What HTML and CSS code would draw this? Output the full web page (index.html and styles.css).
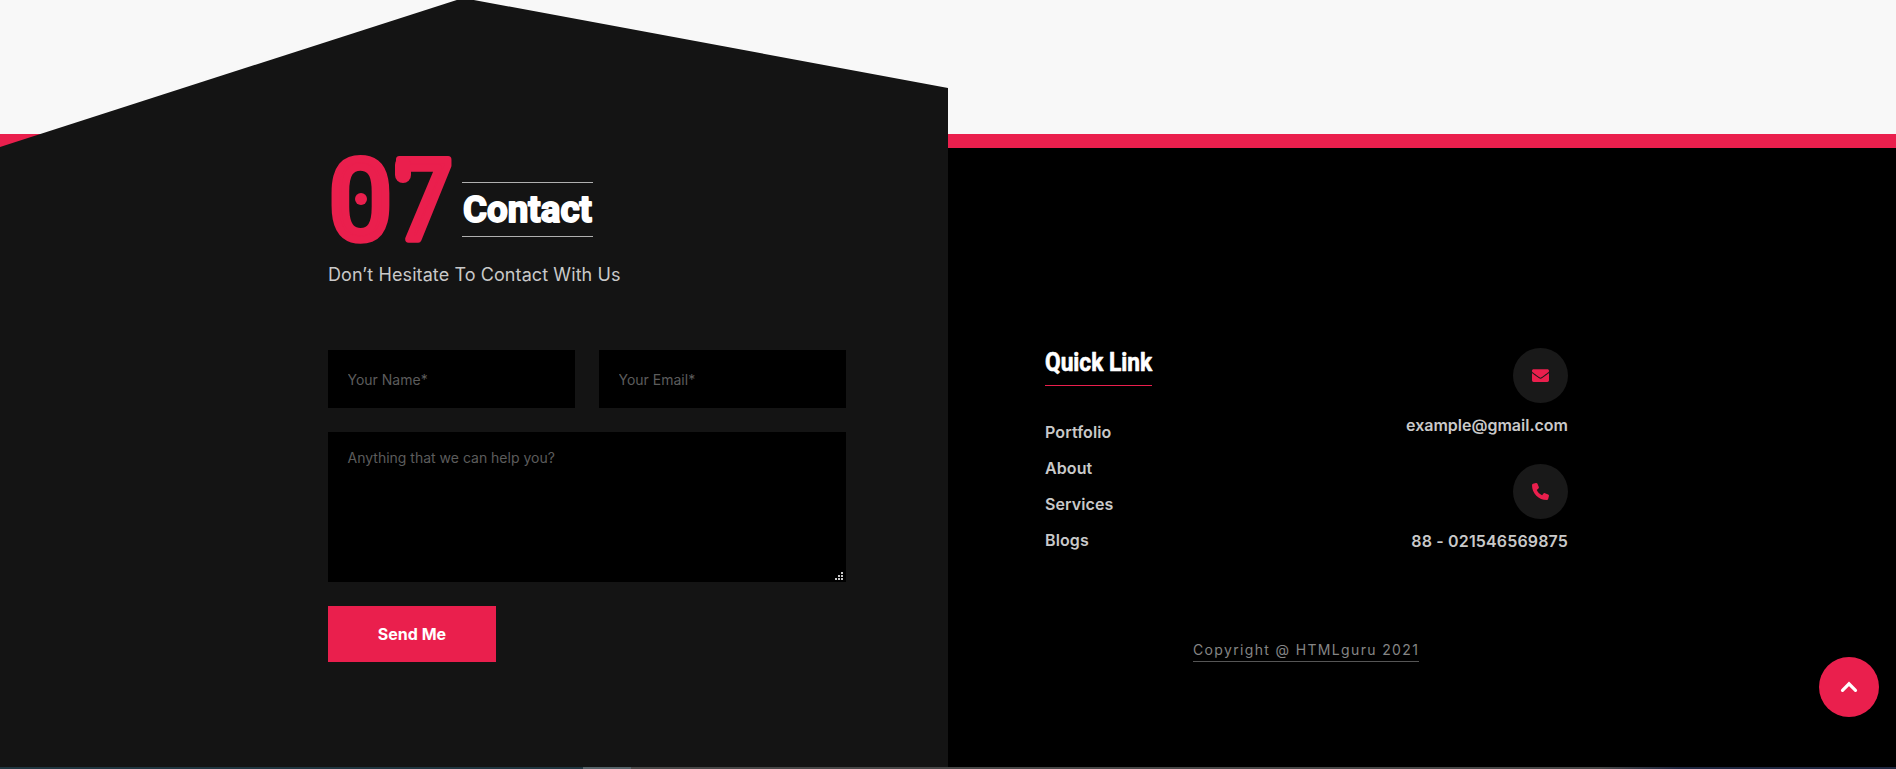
FILE: index.html
```html
<!DOCTYPE html>
<html lang="en">
<head>
<meta charset="utf-8">
<title>Contact</title>
<link rel="stylesheet" href="styles.css">
</head>
<body>
<main class="page">
  <div class="band"></div>
  <div class="columns">
    <section class="contact">
      <header class="title">
        <svg class="number" width="126" height="96" viewBox="0 0 126 96"><text y="86.500"><tspan x="0">0</tspan><tspan x="66.500" textLength="57" lengthAdjust="spacingAndGlyphs">7</tspan></text><circle cx="32" cy="47" r="6"/><path d="M74 13v10"/></svg>
        <h2 class="heading"><svg width="131" height="53" viewBox="0 0 131 53"><text x="1" y="39" textLength="129" lengthAdjust="spacingAndGlyphs">Contact</text></svg></h2>
      </header>
      <p class="subtitle">Don’t Hesitate To Contact With Us</p>
      <form class="form">
        <div class="row">
          <input class="field" type="text" placeholder="Your Name*">
          <input class="field" type="text" placeholder="Your Email*">
        </div>
        <div class="message">
          <textarea class="field area" placeholder="Anything that we can help you?"></textarea>
          <svg class="grip" width="8" height="8" viewBox="0 0 8 8"><path d="M6 0h2v2H6zM3 3h2v2H3zM6 3h2v2H6zM0 6h2v2H0zM3 6h2v2H3zM6 6h2v2H6z"/></svg>
        </div>
        <button class="send" type="button">Send Me</button>
      </form>
    </section>
    <footer class="footer">
      <div class="info">
        <nav class="links">
          <h3 class="links-title"><svg width="107" height="37" viewBox="0 0 107 37"><text x="0" y="23" textLength="107" lengthAdjust="spacingAndGlyphs">Quick Link</text></svg></h3>
          <a>Portfolio</a>
          <a>About</a>
          <a>Services</a>
          <a>Blogs</a>
        </nav>
        <div class="reach">
          <span class="disc"><svg width="17" height="17" viewBox="0 0 512 512"><path d="M502.3 190.8c3.9-3.1 9.7-.2 9.7 4.700V400c0 26.500-21.500 48-48 48H48c-26.500 0-48-21.500-48-48V195.600c0-5 5.700-7.800 9.700-4.700 22.400 17.400 52.100 39.500 154.100 113.600 21.100 15.400 56.700 47.800 92.200 47.600 35.700.3 72-32.800 92.300-47.600 102-74.100 131.600-96.300 154-113.700zM256 320c23.200.4 56.600-29.200 73.400-41.400 132.700-96.300 142.800-104.700 173.400-128.700 5.800-4.500 9.200-11.500 9.200-18.900v-19c0-26.500-21.500-48-48-48H48c-26.500 0-48 21.500-48 48v19c0 7.400 3.400 14.300 9.200 18.900 30.600 23.900 40.700 32.400 173.400 128.700 16.800 12.200 50.200 41.800 73.400 41.400z"/></svg></span>
          <p class="reach-text">example@gmail.com</p>
          <span class="disc"><svg width="17" height="17" viewBox="0 0 512 512"><path d="M164.900 24.600c-7.700-18.600-28-28.500-47.400-23.200l-88 24C12.100 30.200 0 46 0 64c0 247.400 200.600 448 448 448 18 0 33.800-12.100 38.600-29.500l24-88c5.300-19.400-4.600-39.700-23.200-47.400l-96-40c-16.300-6.800-35.200-2.100-46.300 11.600L304.700 368C234.300 334.700 177.300 277.700 144 207.300l49.300-40.400c13.700-11.200 18.400-30 11.600-46.300l-40-96z"/></svg></span>
          <p class="reach-text phone">88 - 021546569875</p>
        </div>
      </div>
      <p class="copyright"><span>Copyright @ HTMLguru 2021</span></p>
    </footer>
  </div>
  <div class="strip"></div>
  <a class="to-top"><svg width="18" height="12" viewBox="0 0 18 12"><path d="M2.500 9.300 9 2.800l6.500 6.500"/></svg></a>
</main>
</body>
</html>
```
FILE: styles.css
```css
* { box-sizing: border-box; }
body { margin: 0; font-family: Inter, sans-serif; color: #c9c9c9; overflow: hidden; }
.page { position: relative; width: 1896px; height: 769px; background: #000; display: flex; flex-direction: column; overflow: hidden; }
.band { height: 148px; background: #f8f8f8; border-bottom: 14px solid #ea1f4d; flex: none; }
.columns { display: grid; grid-template-columns: 948px 948px; height: 621px; flex: none; }
.contact { margin-top: -150px; height: 771px; padding: 154px 102px 0 328px; background: #141414; clip-path: polygon(0 149px, 463px 0, 100% 90px, 100% 100%, 0 100%); }
.title { display: flex; align-items: flex-start; height: 103px; }
.number { margin-left: 1px; overflow: visible; }
.number text { font: 400 112px Roboto, sans-serif; fill: #ea1f4d; stroke: #ea1f4d; stroke-width: 7.5px; stroke-linejoin: round; }
.number circle { fill: #ea1f4d; }
.number path { fill: none; stroke: #ea1f4d; stroke-width: 16px; stroke-linecap: round; }
.heading { margin: 30px 0 0 7px; height: 55px; border: solid #b0b0b0; border-width: 1px 0; }
.heading svg, .links-title svg { display: block; overflow: visible; }
.heading text { font: 700 37px Roboto, sans-serif; fill: #fff; stroke: #fff; stroke-width: 1.8px; stroke-linejoin: round; }
.subtitle { margin: 6px 0 0; font-size: 18px; line-height: 28px; letter-spacing: .09px; }
.form { margin-top: 61px; display: flex; flex-direction: column; gap: 24px; align-items: flex-start; }
.row { display: grid; grid-template-columns: 247px 247px; gap: 24px; }
.field { width: 100%; height: 58px; margin: 0; padding: 0 19.5px; border: 0; border-radius: 0; background: #000; color: #c9c9c9; font: 14px Inter, sans-serif; }
.field::placeholder { color: #5c5c5c; opacity: 1; }
.message { position: relative; width: 518px; height: 150px; }
.area { height: 150px; display: block; padding-top: 17px; resize: none; }
.grip { position: absolute; right: 3px; bottom: 2px; fill: #c8c8c8; }
.send { width: 168px; height: 56px; border: 0; padding: 0; background: #ea1f4d; color: #fff; font: bold 16px Inter, sans-serif; }
.footer { padding: 200px 328px 0 97px; }
.info { display: flex; justify-content: space-between; height: 286px; }
.links { display: flex; flex-direction: column; align-items: flex-start; font-weight: 600; font-size: 16px; line-height: 36px; letter-spacing: .1px; }
.links-title { margin: 0 0 28px; height: 38px; border-bottom: 1px solid #ea1f4d; letter-spacing: 0; }
.links-title text { font: 700 25px Roboto, sans-serif; fill: #fff; stroke: #fff; stroke-width: .6px; stroke-linejoin: round; }
.reach { display: flex; flex-direction: column; align-items: flex-end; font-weight: 600; font-size: 16px; }
.disc { width: 55px; height: 55px; border-radius: 50%; background: #191919; display: grid; place-items: center; fill: #ea1f4d; }
.reach-text { margin: 10px 0 27px; line-height: 24px; }
.phone { letter-spacing: .15px; }
.copyright { margin: 6px 0 0; padding-left: 148px; font-size: 14px; line-height: 20px; letter-spacing: 1.35px; color: #858585; display: flex; }
.copyright span { border-bottom: 1px solid #555; height: 22px; }
.strip { position: absolute; left: 0; right: 0; bottom: 0; height: 2px; background: linear-gradient(90deg, #203640 583px, #56646a 583px, #56646a 631px, #484848 631px, #484848 1600px, #1e2740 1680px); }
.to-top { position: absolute; left: 1819px; top: 657px; width: 60px; height: 60px; border-radius: 50%; background: #ea1f4d; display: grid; place-items: center; }
.to-top path { fill: none; stroke: #fff; stroke-width: 3.2; stroke-linecap: round; }
```
